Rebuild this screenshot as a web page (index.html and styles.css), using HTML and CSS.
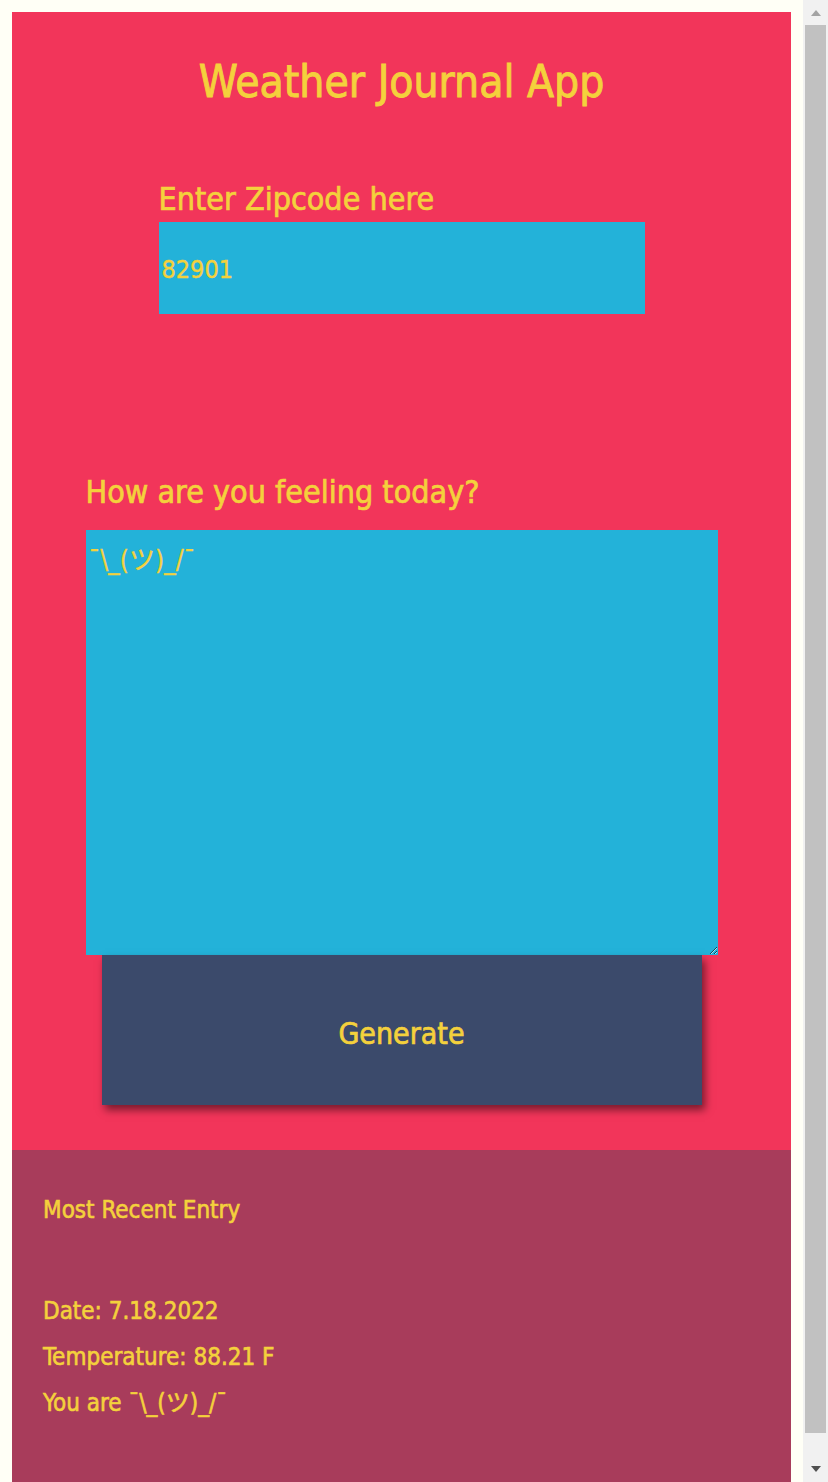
FILE: index.html
```html
<!DOCTYPE html>
<html lang="en">
<head>
<meta charset="utf-8">
<title>Weather Journal App</title>
<link rel="stylesheet" href="styles.css">
</head>
<body>
<div class="app">
  <h1 class="title">Weather Journal App</h1>
  <div class="zip-group">
    <label class="label" for="zip">Enter Zipcode here</label>
    <input id="zip" class="zip-input" type="text" value="82901">
  </div>
  <div class="feel-group">
    <label class="label" for="feelings">How are you feeling today?</label>
    <textarea id="feelings" class="feel-input">¯\_(ツ)_/¯</textarea>
    <button class="generate" type="button">Generate</button>
  </div>
</div>
<div class="entry">
  <div class="entry-title">Most Recent Entry</div>
  <div class="entry-holder">
    <div class="entry-line">Date: 7.18.2022</div>
    <div class="entry-line">Temperature: 88.21 F</div>
    <div class="entry-line">You are ¯\_(ツ)_/¯</div>
  </div>
</div>
<div class="scrollbar" aria-hidden="true">
  <span class="sb-arrow sb-up"></span>
  <span class="sb-thumb"></span>
  <span class="sb-arrow sb-down"></span>
</div>
</body>
</html>
```
FILE: styles.css
```css
html, body {
  margin: 0;
  padding: 0;
}
body {
  background: #fffff6;
  padding: 12px;
  font-family: "DejaVu Sans Condensed", "Liberation Sans Narrow", "Liberation Sans", "Noto Sans CJK JP", sans-serif;
  color: #f4d13c;
  -webkit-text-stroke: 0.6px currentColor;
}
.app, .entry {
  width: 779px;
}
.app {
  background: #f2355a;
  padding-top: 40px;
  padding-bottom: 45px;
  display: flex;
  flex-direction: column;
  align-items: center;
}
.title {
  margin: 0;
  font-size: 44px;
  line-height: 60px;
  font-weight: normal;
  text-align: center;
  -webkit-text-stroke: 0.9px currentColor;
}
.zip-group {
  width: 486px;
  margin-top: 64px;
  display: flex;
  flex-direction: column;
}
.label {
  display: block;
  font-size: 32px;
  line-height: 46px;
  height: 46px;
  -webkit-text-stroke: 0.7px currentColor;
}
.zip-input {
  width: 486px;
  height: 92px;
  box-sizing: border-box;
  border: none;
  outline: none;
  background: #23b2d9;
  color: #f4d13c;
  font-family: inherit;
  font-size: 25px;
  padding: 2px 3px 0;
  -webkit-text-stroke: 0.4px currentColor;
}
.feel-group {
  width: 632px;
  margin-top: 155px;
  display: flex;
  flex-direction: column;
  align-items: center;
}
.feel-group .label {
  align-self: stretch;
  margin-bottom: 15px;
}
.feel-input {
  display: block;
  width: 632px;
  height: 425px;
  box-sizing: border-box;
  border: none;
  outline: none;
  background: #23b2d9;
  color: #f4d13c;
  font-family: inherit;
  font-size: 26px;
  line-height: 36px;
  padding: 12px 3px 0;
  margin: 0;
  -webkit-text-stroke: 0.3px currentColor;
}
.generate {
  display: block;
  width: 600px;
  height: 150px;
  border: none;
  background: #3b4a6b;
  color: #f4d13c;
  font-family: inherit;
  font-size: 30px;
  padding: 6px 0 0;
  box-shadow: 3px 5px 8px rgba(0, 0, 0, 0.5);
  cursor: pointer;
  -webkit-text-stroke: 0.7px currentColor;
}
.entry {
  background: #a83c5b;
  box-sizing: border-box;
  padding: 37px 31px 80px;
  line-height: 46px;
}
.entry-title {
  font-size: 24px;
}
.entry-holder {
  margin-top: 55px;
  font-size: 24px;
}
.scrollbar {
  position: fixed;
  top: 0;
  right: 0;
  bottom: 0;
  width: 25px;
  background: #f1f1f1;
  display: flex;
  flex-direction: column;
  align-items: center;
}
.sb-arrow {
  width: 0;
  height: 0;
  border-left: 5.5px solid transparent;
  border-right: 5.5px solid transparent;
}
.sb-up {
  margin-top: 10px;
  border-bottom: 6px solid #a3a3a3;
}
.sb-thumb {
  margin-top: 9px;
  width: 21px;
  height: 1408px;
  background: #c1c1c1;
}
.sb-down {
  margin-top: 33px;
  border-top: 6px solid #505050;
}
```
